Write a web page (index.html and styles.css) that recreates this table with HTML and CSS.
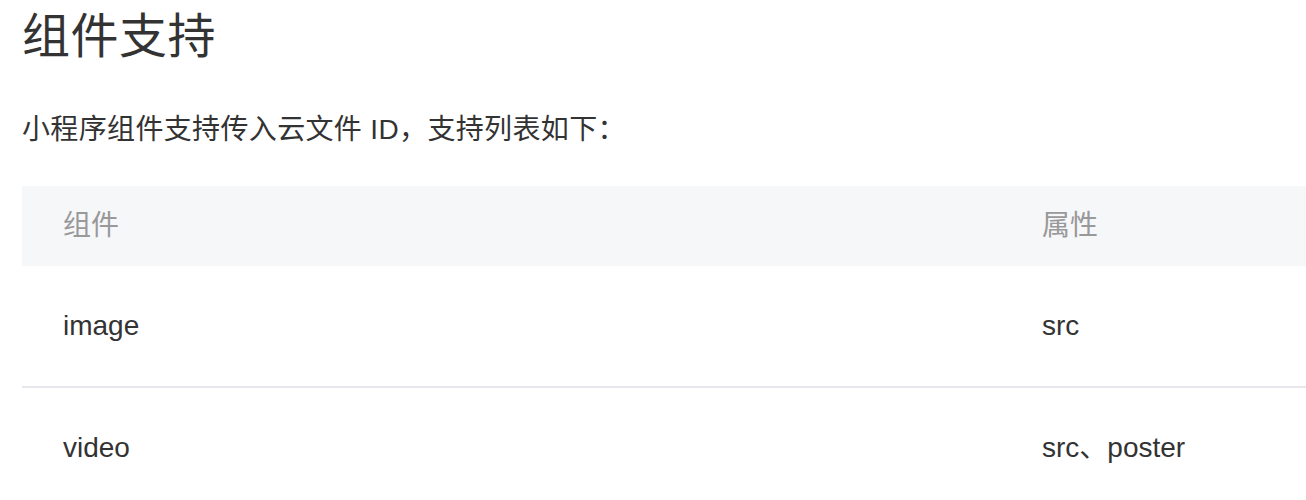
FILE: index.html
```html
<!DOCTYPE html>
<html lang="zh-CN">
<head>
<meta charset="utf-8">
<link rel="stylesheet" href="styles.css">
</head>
<body>
<main class="doc">
  <h2 class="title">组件支持</h2>
  <p class="intro">小程序组件支持传入云文件 ID，支持列表如下：</p>
  <table class="support">
    <colgroup><col class="c1"><col class="c2"></colgroup>
    <thead>
      <tr><th>组件</th><th>属性</th></tr>
    </thead>
    <tbody>
      <tr><td>image</td><td>src</td></tr>
      <tr><td>video</td><td>src、poster</td></tr>
    </tbody>
  </table>
</main>
</body>
</html>
```
FILE: styles.css
```css
html, body {
  margin: 0;
  padding: 0;
  background: #fff;
}
body {
  font-family: "Liberation Sans", "Noto Sans CJK SC", sans-serif;
  color: #333;
}
.doc {
  padding-left: 22px;
  overflow: hidden;
}
.title {
  margin: 0;
  padding-top: 2px;
  font-size: 48px;
  font-weight: 400;
  line-height: 70px;
  letter-spacing: 0.5px;
  color: #333;
}
.intro {
  margin: 37px 0 35px;
  font-size: 28px;
  line-height: 42px;
  letter-spacing: 0.35px;
  color: #333;
}
.support {
  width: 1300px;
  border-collapse: collapse;
  table-layout: fixed;
}
.support .c1 { width: 979px; }
.support th {
  text-align: left;
  font-weight: 400;
  font-size: 28px;
  line-height: 40px;
  color: #999;
  background: #f6f7f9;
  padding: 20px 40px 20px 41px;
}
.support td {
  text-align: left;
  font-size: 28px;
  line-height: 40px;
  color: #333;
  padding: 40px 40px 40px 41px;
}
.support tbody tr + tr td {
  border-top: 2px solid #e7e7ed;
}
```
